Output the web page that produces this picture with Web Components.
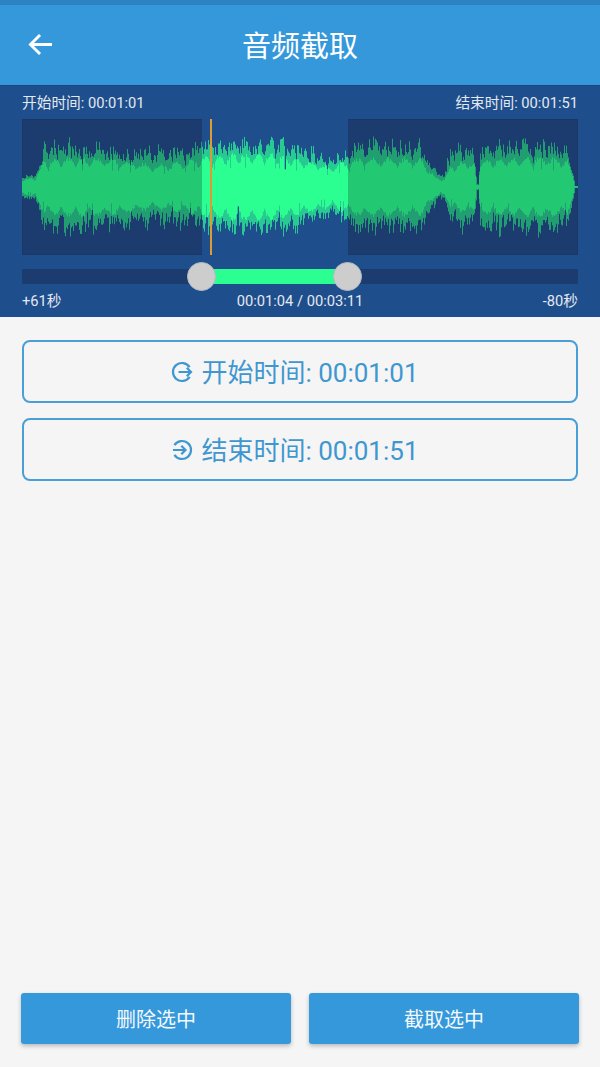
<!DOCTYPE html>
<html lang="zh">
<head>
<meta charset="utf-8">
<title>音频截取</title>
<style>
  html, body { margin: 0; height: 100%; }
  body { background: #f5f5f5; font-family: Roboto, "Noto Sans CJK SC", sans-serif; }
</style>
</head>
<body>
<audio-cut-page></audio-cut-page>
<script>
// Barra superior
class AppHeader extends HTMLElement {
  constructor() {
    super();
    this.attachShadow({ mode: 'open' }).innerHTML = `
      <style>
        :host { display: block; flex: none; background: #3498db; border-top: 5px solid #2b83c1; box-sizing: border-box; height: 85px; color: #fff; }
        .bar { position: relative; display: flex; align-items: center; justify-content: center; height: 80px; padding-bottom: 2px; box-sizing: border-box; }
        .back { position: absolute; left: 28px; top: 28px; width: 25px; height: 23px; }
        h1 { margin: 0; font: 400 29px Roboto, "Noto Sans CJK SC", sans-serif; }
      </style>
      <div class="bar">
        <svg class="back" viewBox="0 0 26 24" fill="none" stroke="#fff" stroke-width="3">
          <path d="M25 12H3M12.5 2L2.5 12l10 10"/>
        </svg>
        <h1><slot></slot></h1>
      </div>`;
  }
}

// Forma de onda generada con un PRNG fijo
class WaveView extends HTMLElement {
  constructor() {
    super();
    this.attachShadow({ mode: 'open' }).innerHTML = `
      <style>
        :host { display: block; position: relative; height: 136px; background: #1c3b6f; box-shadow: inset 0 0 0 1px #1a3768; }
        .sel { position: absolute; left: 180px; width: 146px; top: 0; bottom: 0; background: #1f4e8c; }
        svg { position: absolute; left: 0; top: 0; width: 556px; height: 136px; }
        .head { position: absolute; left: 188px; top: 0; bottom: 0; width: 2px; background: #e09a33; }
      </style>
      <div class="sel"></div>
      <svg viewBox="0 0 556 136">
        <defs>
          <linearGradient id="body" gradientUnits="userSpaceOnUse" x1="0" y1="0" x2="556" y2="0">
            <stop offset="0" stop-color="#23c972"/><stop offset="0.3237" stop-color="#23c972"/>
            <stop offset="0.3237" stop-color="#2bff92"/><stop offset="0.5863" stop-color="#2bff92"/>
            <stop offset="0.5863" stop-color="#23c972"/><stop offset="1" stop-color="#23c972"/>
          </linearGradient>
        </defs>
        <path class="needles" fill="url(#body)" fill-opacity="0.7"></path>
        <path class="core" fill="url(#body)"></path>
      </svg>
      <div class="head"></div>`;
  }

  connectedCallback() {
    // Envolvente: [x, cuerpo, pico]
    const env = [[0,8,13],[13,9,14],[15,14,20],[18,19,34],[22,26,50],[50,28,52],[90,27,50],[130,21,46],[160,24,48],
      [180,28,50],[215,32,50],[250,32,52],[285,25,46],[305,20,34],[326,25,42],[340,28,52],[400,27,52],[408,15,30],
      [414,9,18],[422,8,16],[428,20,46],[445,26,50],[452,22,44],[454,2,4],[456,2,4],[458,26,50],[520,29,52],
      [545,26,46],[550,12,16],[552,1,1],[556,1,1]];
    const lerp = (x, k) => {
      for (let i = 1; i < env.length; i++) {
        if (x <= env[i][0]) {
          const a = env[i - 1], b = env[i];
          return a[k] + (b[k] - a[k]) * (x - a[0]) / (b[0] - a[0] || 1);
        }
      }
      return 1;
    };
    let seed = 48271;
    const rnd = () => (seed = (seed * 16807) % 2147483647) / 2147483647;
    for (let i = 0; i < 20; i++) rnd();
    const mid = 68;
    // Pulso rítmico: los picos se agrupan cada 13-15 px
    const beat = (x) => Math.pow(Math.abs(Math.sin(x * Math.PI / 14.3 + Math.sin(x / 37))), 1.1);
    const side = (x) => {
      const body = lerp(x, 1), peak = lerp(x, 2);
      const top = body + (peak - body) * Math.pow(rnd(), 1.15) * (0.55 + 0.45 * beat(x));
      // Muescas finas que cortan el cuerpo
      return rnd() < 0.04 ? body * 0.6 : top;
    };
    let core = '', needles = '';
    let prevUp = 0, prevDown = 0;
    for (let x = 0; x < 556; x++) {
      const up = side(x), down = side(x);
      const base = lerp(x, 1) * (0.72 + 0.3 * beat(x)) * (0.92 + rnd() * 0.16);
      // Las agujas duran 1-2 px: se mezcla con la columna anterior
      const nu = Math.max(up, prevUp * 0.82), nd = Math.max(down, prevDown * 0.82);
      prevUp = up; prevDown = down;
      needles += `M${x} ${(mid - nu).toFixed(1)}h1V${(mid + nd).toFixed(1)}h-1Z`;
      core += `M${x} ${(mid - Math.min(up, base)).toFixed(1)}h1V${(mid + Math.min(down, base)).toFixed(1)}h-1Z`;
    }
    this.shadowRoot.querySelector('.core').setAttribute('d', core);
    this.shadowRoot.querySelector('.needles').setAttribute('d', needles);
  }
}

// Pista con dos tiradores
class RangeBar extends HTMLElement {
  constructor() {
    super();
    this.attachShadow({ mode: 'open' }).innerHTML = `
      <style>
        :host { display: block; position: relative; height: 15px; background: #1c3b6f; }
        .fill { position: absolute; left: 180px; width: 146px; top: 0; bottom: 0; background: #2bff92; }
        .knob { position: absolute; top: -7px; width: 29px; height: 29px; box-sizing: border-box; border-radius: 50%; background: #cdcdcd; border: 1px solid #b4bac2; }
      </style>
      <div class="fill"></div>
      <div class="knob" style="left:165px"></div>
      <div class="knob" style="left:311px"></div>`;
  }
}

// Panel oscuro de la onda
class WavePanel extends HTMLElement {
  constructor() {
    super();
    this.attachShadow({ mode: 'open' }).innerHTML = `
      <style>
        :host { display: block; flex: none; background: #1f4e8c; color: #e3e9f1; font-size: 14.7px; height: 232px; box-sizing: border-box; padding: 8px 22px 0; box-shadow: inset 0 1px 0 #1c4580; }
        .row { display: flex; justify-content: space-between; line-height: 20px; }
        .top { margin-bottom: 6px; }
        range-bar { margin-top: 14px; }
        .bottom { margin-top: 7px; position: relative; }
        .center { position: absolute; left: 0; right: 0; text-align: center; }
      </style>
      <div class="row top"><span>开始时间: 00:01:01</span><span>结束时间: 00:01:51</span></div>
      <wave-view></wave-view>
      <range-bar></range-bar>
      <div class="row bottom"><span>+61秒</span><span class="center">00:01:04 / 00:03:11</span><span>-80秒</span></div>`;
  }
}

// Botón con contorno e icono
class TimeButton extends HTMLElement {
  constructor() {
    super();
    const icons = {
      start: '<path d="M18.6 6.2A9 9 0 1 0 18.6 15.8"/><path d="M7.5 11H20M15.8 6.8L20 11l-4.2 4.2"/>',
      end: '<path d="M3.4 6.2A9 9 0 1 1 3.4 15.8"/><path d="M2 11H14.5M10.3 6.8L14.5 11l-4.2 4.2"/>'
    };
    const icon = icons[this.getAttribute('icon')] || '';
    this.attachShadow({ mode: 'open' }).innerHTML = `
      <style>
        :host { display: block; height: 63px; box-sizing: border-box; border: 2px solid #4a9fd6; border-radius: 8px; color: #3f97d0; }
        .in { display: flex; align-items: center; justify-content: center; gap: 8px; height: 100%; font-size: 26px; padding: 0 10px 3px 0; box-sizing: border-box; }
        svg { width: 22px; height: 22px; flex: none; margin-top: 3px; }
      </style>
      <div class="in">
        <svg viewBox="0 0 22 22" fill="none" stroke="#3f97d0" stroke-width="2.2">${icon}</svg>
        <span><slot></slot></span>
      </div>`;
  }
}

// Botón sólido inferior
class SolidButton extends HTMLElement {
  constructor() {
    super();
    this.attachShadow({ mode: 'open' }).innerHTML = `
      <style>
        :host { display: flex; flex: 1; height: 51px; align-items: center; justify-content: center; background: #3498db; color: #f4f9fd; font-size: 20px; border-radius: 3px; box-shadow: 0 2px 4px rgba(0,0,0,.25); }
      </style>
      <slot></slot>`;
  }
}

// Página completa
class AudioCutPage extends HTMLElement {
  constructor() {
    super();
    this.attachShadow({ mode: 'open' }).innerHTML = `
      <style>
        :host { display: flex; flex-direction: column; height: 1067px; overflow: hidden; background: #f5f5f5; font-family: Roboto, "Noto Sans CJK SC", sans-serif; }
        .times { flex: 1; display: flex; flex-direction: column; gap: 15px; padding: 23px 22px 0; }
        .actions { display: flex; gap: 18px; padding: 0 21px 23px; }
      </style>
      <app-header>音频截取</app-header>
      <wave-panel></wave-panel>
      <div class="times">
        <time-button icon="start">开始时间: 00:01:01</time-button>
        <time-button icon="end">结束时间: 00:01:51</time-button>
      </div>
      <div class="actions">
        <solid-button>删除选中</solid-button>
        <solid-button>截取选中</solid-button>
      </div>`;
  }
}

customElements.define('app-header', AppHeader);
customElements.define('wave-view', WaveView);
customElements.define('range-bar', RangeBar);
customElements.define('wave-panel', WavePanel);
customElements.define('time-button', TimeButton);
customElements.define('solid-button', SolidButton);
customElements.define('audio-cut-page', AudioCutPage);
</script>
</body>
</html>
